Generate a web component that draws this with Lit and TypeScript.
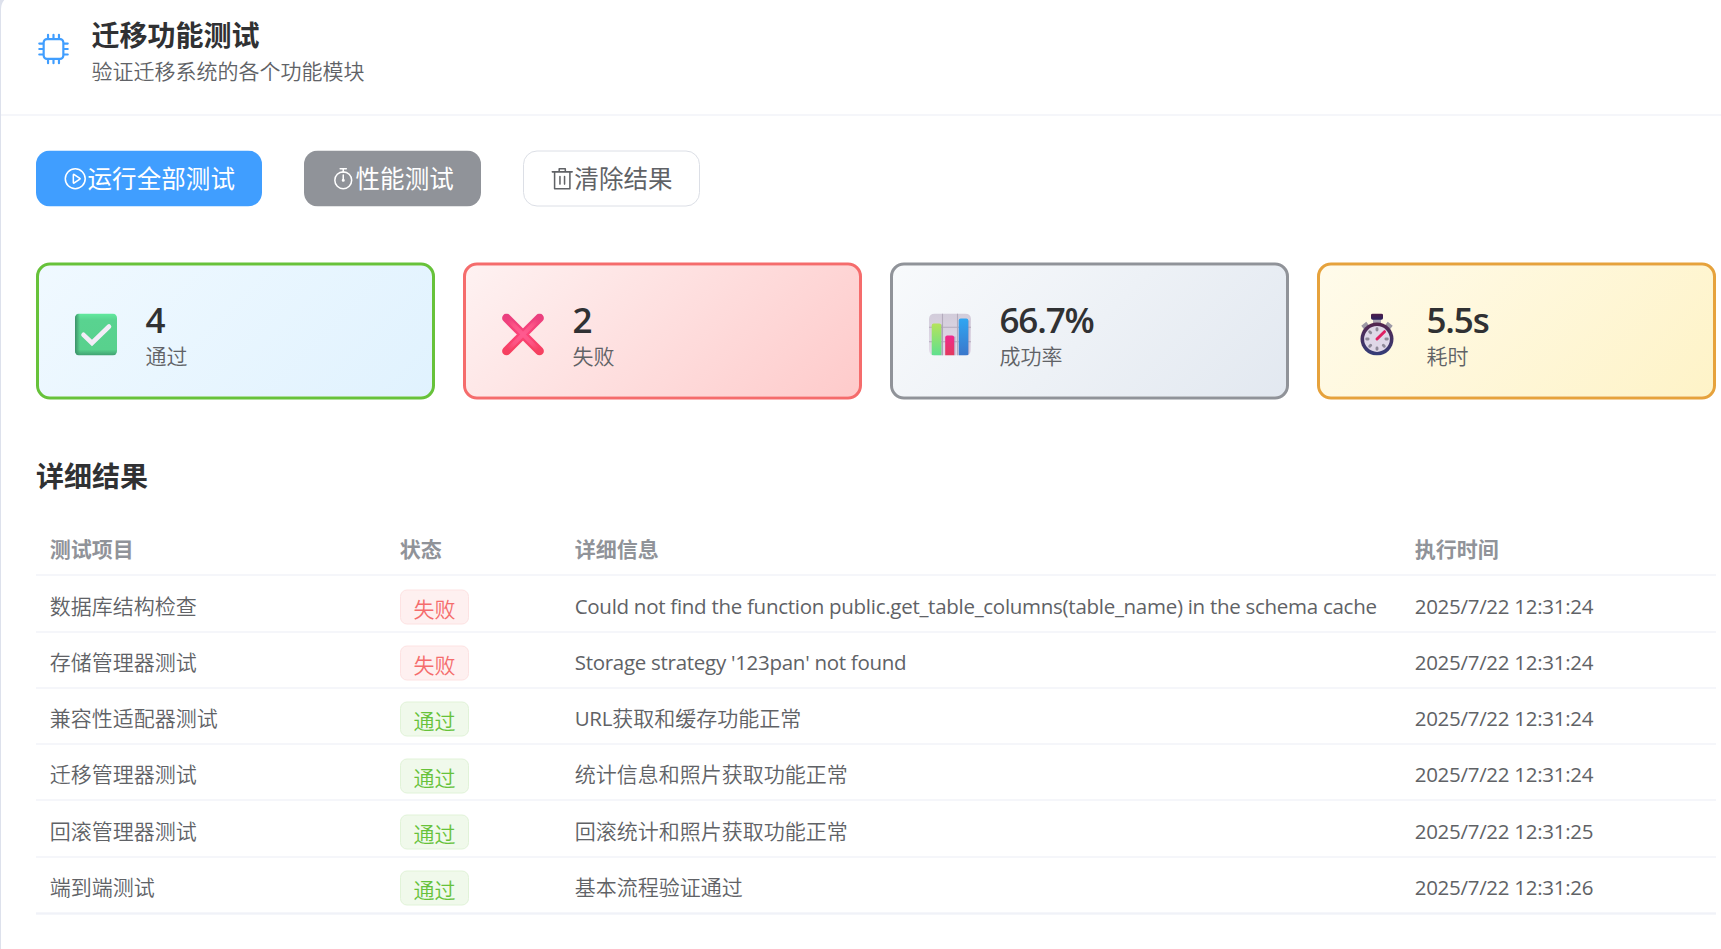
import { LitElement, html, css, svg } from "lit";
import { customElement } from "lit/decorators.js";

const icon = (...paths: string[]) => html`<svg class="icon" viewBox="0 0 1024 1024" fill="currentColor">
  ${paths.map((d) => svg`<path d=${d}></path>`)}
</svg>`;

const cpuIcon = icon(
  "M320 256a64 64 0 0 0-64 64v384a64 64 0 0 0 64 64h384a64 64 0 0 0 64-64V320a64 64 0 0 0-64-64zm0-64h384a128 128 0 0 1 128 128v384a128 128 0 0 1-128 128H320a128 128 0 0 1-128-128V320a128 128 0 0 1 128-128",
  "M512 64a32 32 0 0 1 32 32v128h-64V96a32 32 0 0 1 32-32m160 0a32 32 0 0 1 32 32v128h-64V96a32 32 0 0 1 32-32m-320 0a32 32 0 0 1 32 32v128h-64V96a32 32 0 0 1 32-32m160 896a32 32 0 0 1-32-32V800h64v128a32 32 0 0 1-32 32m160 0a32 32 0 0 1-32-32V800h64v128a32 32 0 0 1-32 32m-320 0a32 32 0 0 1-32-32V800h64v128a32 32 0 0 1-32 32M64 512a32 32 0 0 1 32-32h128v64H96a32 32 0 0 1-32-32m0-160a32 32 0 0 1 32-32h128v64H96a32 32 0 0 1-32-32m0 320a32 32 0 0 1 32-32h128v64H96a32 32 0 0 1-32-32m896-160a32 32 0 0 1-32 32H800v-64h128a32 32 0 0 1 32 32m0-160a32 32 0 0 1-32 32H800v-64h128a32 32 0 0 1 32 32m0 320a32 32 0 0 1-32 32H800v-64h128a32 32 0 0 1 32 32"
);
const playIcon = icon(
  "M512 64a448 448 0 1 1 0 896 448 448 0 0 1 0-896m0 832a384 384 0 0 0 0-768 384 384 0 0 0 0 768m-48-247.616L668.608 512 464 375.616zm10.624-342.656 249.472 166.336a48 48 0 0 1 0 79.872L474.624 718.272A48 48 0 0 1 400 678.336V345.6a48 48 0 0 1 74.624-39.936z"
);
const timerIcon = icon(
  "M512 896a320 320 0 1 0 0-640 320 320 0 0 0 0 640m0 64a384 384 0 1 1 0-768 384 384 0 0 1 0 768",
  "M512 320a32 32 0 0 1 32 32l-.512 224a32 32 0 1 1-64 0L480 352a32 32 0 0 1 32-32",
  "M448 576a64 64 0 1 0 128 0 64 64 0 1 0-128 0m96-448v128h-64V128h-96a32 32 0 0 1 0-64h256a32 32 0 1 1 0 64z"
);
const deleteIcon = icon(
  "M160 256H96a32 32 0 0 1 0-64h256V95.936a32 32 0 0 1 32-32h256a32 32 0 0 1 32 32V192h256a32 32 0 1 1 0 64h-64v672a32 32 0 0 1-32 32H192a32 32 0 0 1-32-32zm448-64v-64H416v64zM224 896h576V256H224zm192-128a32 32 0 0 1-32-32V416a32 32 0 0 1 64 0v320a32 32 0 0 1-32 32m192 0a32 32 0 0 1-32-32V416a32 32 0 0 1 64 0v320a32 32 0 0 1-32 32"
);

const checkArt = html`<svg class="art" viewBox="0 0 42 42">
  <defs>
    <linearGradient id="ck" x1="0" y1="0" x2="0" y2="1">
      <stop offset="0" stop-color="#62ea9e" /><stop offset=".16" stop-color="#59d390" />
      <stop offset=".86" stop-color="#58d18d" /><stop offset="1" stop-color="#3f9f70" />
    </linearGradient>
    <linearGradient id="ckl"><stop offset="0" stop-color="#3c9068" /><stop offset="1" stop-color="#3c9068" stop-opacity="0" /></linearGradient>
  </defs>
  <rect width="42" height="42" rx="4.5" fill="url(#ck)" />
  <path d="M4.500 0H5v42h-.5A4.500 4.500 0 0 1 0 37.500V4.500A4.500 4.500 0 0 1 4.500 0z" fill="url(#ckl)" />
  <path d="M8.500 21.300L17 29.500L34 13" fill="none" stroke="#f4edf8" stroke-width="4.600" stroke-linecap="round" />
</svg>`;

const crossArt = html`<svg class="art" viewBox="0 0 42 42">
  <defs>
    <linearGradient id="cr" x1="0" y1="0" x2="0" y2="42" gradientUnits="userSpaceOnUse">
      <stop offset="0" stop-color="#e83f80" /><stop offset=".5" stop-color="#fb4377" /><stop offset="1" stop-color="#f5405c" />
    </linearGradient>
    <radialGradient id="crg" cx="21" cy="21" r="21" gradientUnits="userSpaceOnUse">
      <stop offset="0" stop-color="#ff5a90" /><stop offset=".6" stop-color="#ff5c8c" stop-opacity=".7" /><stop offset="1" stop-color="#ff5c8c" stop-opacity="0" />
    </radialGradient>
  </defs>
  <path d="M4.500 4.500L37.500 37.500M37.500 4.500L4.500 37.500" stroke="url(#cr)" stroke-width="8.800" stroke-linecap="round" />
  <path d="M5 5L37 37M37 5L5 37" stroke="url(#crg)" stroke-width="4" stroke-linecap="round" />
</svg>`;

const chartArt = html`<svg class="art" viewBox="0 0 42 42">
  <defs>
    <linearGradient id="bg" x1="0" y1="0" x2="0" y2="1"><stop offset="0" stop-color="#d2ccda" /><stop offset="1" stop-color="#e4dcea" /></linearGradient>
    <linearGradient id="b1" x1="0" y1="0" x2="0" y2="1"><stop offset="0" stop-color="#b5e35c" /><stop offset="1" stop-color="#5fe08f" /></linearGradient>
    <linearGradient id="b2" x1="0" y1="0" x2="0" y2="1"><stop offset="0" stop-color="#f0288e" /><stop offset="1" stop-color="#e23a5c" /></linearGradient>
    <linearGradient id="b3" x1="0" y1="0" x2="0" y2="1"><stop offset="0" stop-color="#30a6f2" /><stop offset="1" stop-color="#3b77cb" /></linearGradient>
    <clipPath id="cc"><rect width="42" height="42" rx="5.500" /></clipPath>
  </defs>
  <g clip-path="url(#cc)">
    <rect width="42" height="42" fill="url(#bg)" />
    <path d="M13.500 0V42M28.500 0V42M0 13.700H42M0 28.300H42" stroke="#b3abbd" stroke-width="1.100" />
    <path d="M12.700 11V42M25.700 23V42M39.600 7V42" stroke="#9c8bb0" stroke-width="1.600" opacity=".5" />
    <path d="M2.700 42V12a2 2 0 0 1 2-2h5.600a2 2 0 0 1 2 2V42z" fill="url(#b1)" />
    <path d="M16.200 42V24a2 2 0 0 1 2-2h5a2 2 0 0 1 2 2V42z" fill="url(#b2)" />
    <path d="M29.700 42V7a2 2 0 0 1 2-2h5.600a2 2 0 0 1 2 2V42z" fill="url(#b3)" />
  </g>
</svg>`;

const watchArt = html`<svg class="art" viewBox="0 0 42 42">
  <defs>
    <linearGradient id="wr" x1="0" y1="0" x2="0" y2="1"><stop offset="0" stop-color="#54254e" /><stop offset="1" stop-color="#343d78" /></linearGradient>
    <linearGradient id="wt" x1="0" y1="0" x2="0" y2="1"><stop offset="0" stop-color="#4e1c48" /><stop offset="1" stop-color="#2c2260" /></linearGradient>
  </defs>
  <path d="M7 14.500L12 10.500M35 14.500L30 10.500" stroke="#9d99a6" stroke-width="5.500" />
  <rect x="17" y="5" width="8" height="6" fill="#aaa4b2" />
  <rect x="15" y="0" width="12" height="6.200" rx="1.600" fill="url(#wt)" />
  <circle cx="21" cy="25.500" r="16.500" fill="url(#wr)" />
  <circle cx="21" cy="25.500" r="12.900" fill="#dfd8e8" />
  <g stroke="#8f8a99" stroke-width="2.900" stroke-linecap="round">
    <path d="M21 15.200v1.400M21 34.400v1.400M10.700 25.500h1.400M29.900 25.500h1.400M13.700 18.200l1 1M27.300 31.800l1 1M13.700 32.800l1-1" />
  </g>
  <path d="M21 25.500L28.500 18.200" stroke="#e01f63" stroke-width="3" stroke-linecap="round" />
</svg>`;

const stats = [
  { kind: "success", art: checkArt, value: "4", label: "通过" },
  { kind: "danger", art: crossArt, value: "2", label: "失败" },
  { kind: "info", art: chartArt, value: "66.7%", label: "成功率" },
  { kind: "warning", art: watchArt, value: "5.5s", label: "耗时" },
];

const rows = [
  { name: "数据库结构检查", ok: false, detail: "Could not find the function public.get_table_columns(table_name) in the schema cache", time: "2025/7/22 12:31:24" },
  { name: "存储管理器测试", ok: false, detail: "Storage strategy '123pan' not found", time: "2025/7/22 12:31:24" },
  { name: "兼容性适配器测试", ok: true, detail: "URL获取和缓存功能正常", time: "2025/7/22 12:31:24" },
  { name: "迁移管理器测试", ok: true, detail: "统计信息和照片获取功能正常", time: "2025/7/22 12:31:24" },
  { name: "回滚管理器测试", ok: true, detail: "回滚统计和照片获取功能正常", time: "2025/7/22 12:31:25" },
  { name: "端到端测试", ok: true, detail: "基本流程验证通过", time: "2025/7/22 12:31:26" },
];

/** Sets Latin runs in their own span, so they keep the regular weight beside the lighter Chinese text. */
const mixed = (text: string) =>
  text
    .split(/([\x20-\x7e]+)/)
    .filter(Boolean)
    .map((part) => (/^[\x20-\x7e]/.test(part) ? html`<span class="latin">${part}</span>` : part));

@customElement("app-root")
export class AppRoot extends LitElement {
  static styles = css`
    :host {
      display: block;
      height: 949px;
      overflow: hidden;
      background: #dde1ec;
      color: #606266;
      font-family: "Open Sans", "Noto Sans CJK SC", sans-serif;
      font-size: 21px;
      line-height: 28px;
    }
    * { box-sizing: border-box; }
    .panel {
      margin: -5px 0 0 1px;
      height: 960px;
      border-radius: 14px 0 0 0;
      background: #fff;
    }
    .shift { transform: translateY(0.5px); }
    .header {
      display: flex;
      align-items: center;
      gap: 20.5px;
      height: 120px;
      padding: 0 35px 13px;
      border-bottom: 1px solid #ebeef5;
    }
    .heading { padding-top: 6px; }
    .icon { display: block; width: 1em; height: 1em; flex: none; }
    .header .icon { width: 35px; height: 35px; color: #409eff; }
    .title { margin: 0; font-size: 28px; line-height: 38px; font-weight: 700; color: #303133; }
    .subtitle { font-weight: 350; line-height: 35px; }
    .body { width: 1715px; padding: 35px 0 0 35px; }
    .actions { display: flex; gap: 42px; }
    .btn {
      display: flex;
      align-items: center;
      height: 56px;
      padding: 0 26px;
      border: 1px solid transparent;
      border-radius: 14px;
      font: inherit;
      font-size: 24.5px;
      letter-spacing: 0.08px;
      white-space: nowrap;
      color: #fff;
    }
    .primary { background: #409eff; }
    .neutral { background: #909399; }
    .plain { background: #fff; border-color: #dcdfe6; color: #606266; }
    .stats {
      display: grid;
      grid-template-columns: repeat(4, 1fr);
      gap: 28px;
      margin-top: 56px;
    }
    .stat {
      display: flex;
      align-items: center;
      gap: 28.5px;
      height: 137px;
      padding: 8px 35px 0 36px;
      border: 3px solid;
      border-radius: 14px;
    }
    .success { border-color: #67c23a; background: linear-gradient(135deg, #f0f9ff, #e0f2fe) border-box; }
    .danger { border-color: #f56c6c; background: linear-gradient(135deg, #fef2f2, #fecaca) border-box; }
    .info { border-color: #909399; background: linear-gradient(135deg, #f8fafc, #e2e8f0) border-box; }
    .warning { border-color: #e6a23c; background: linear-gradient(135deg, #fffbeb, #fef3c7) border-box; }
    .art { display: block; width: 42px; height: 42px; flex: none; margin-top: -1px; }
    .value { font-size: 35px; line-height: 41px; font-weight: 600; color: #303133; letter-spacing: -1.15px; }
    .label { line-height: 32px; font-weight: 350; }
    .section { margin: 55px 0 0; font-size: 28px; line-height: 42px; font-weight: 700; color: #303133; }
    .table { margin-top: 29px; border-bottom: 1px solid #ebeef5; font-weight: 350; }
    .row {
      display: grid;
      grid-template-columns: 350px 175px 840px 315px;
      align-items: center;
      height: 56.25px;
      border-bottom: 1px solid #ebeef5;
    }
    .head { height: 50.3px; font-weight: 700; color: #909399; }
    .cell { padding: 3.6px 0 0 13.7px; white-space: nowrap; }
    .head .cell { padding-top: 0; padding-bottom: 2.5px; }
    .latin { font-size: 20.5px; font-weight: 400; letter-spacing: -0.28px; }
    .tagcell { padding: 7px 0 0 14px; }
    .tag {
      display: flex;
      align-items: center;
      justify-content: center;
      width: 69px;
      height: 35px;
      padding-top: 3px;
      border: 1px solid;
      border-radius: 7px;
    }
    .fail { color: #f56c6c; background: #fef0f0; border-color: #fde2e2; }
    .pass { color: #67c23a; background: #f0f9eb; border-color: #e1f3d8; }
  `;

  render() {
    return html`<div class="panel">
      <div class="shift">
        <header class="header">
          ${cpuIcon}
          <div class="heading">
            <h1 class="title">迁移功能测试</h1>
            <div class="subtitle">验证迁移系统的各个功能模块</div>
          </div>
        </header>
        <main class="body">
          <div class="actions">
            <button class="btn primary">${playIcon}<span>运行全部测试</span></button>
            <button class="btn neutral">${timerIcon}<span>性能测试</span></button>
            <button class="btn plain">${deleteIcon}<span>清除结果</span></button>
          </div>
          <section class="stats">
            ${stats.map(
              (s) => html`<div class="stat ${s.kind}">
                ${s.art}
                <div>
                  <div class="value">${s.value}</div>
                  <div class="label">${s.label}</div>
                </div>
              </div>`
            )}
          </section>
          <h2 class="section">详细结果</h2>
          <div class="table">
            <div class="row head">
              <div class="cell">测试项目</div>
              <div class="cell">状态</div>
              <div class="cell">详细信息</div>
              <div class="cell">执行时间</div>
            </div>
            ${rows.map(
              (r) => html`<div class="row">
                <div class="cell">${r.name}</div>
                <div class="tagcell"><div class="tag ${r.ok ? "pass" : "fail"}">${r.ok ? "通过" : "失败"}</div></div>
                <div class="cell">${mixed(r.detail)}</div>
                <div class="cell">${mixed(r.time)}</div>
              </div>`
            )}
          </div>
        </main>
      </div>
    </div>`;
  }
}
